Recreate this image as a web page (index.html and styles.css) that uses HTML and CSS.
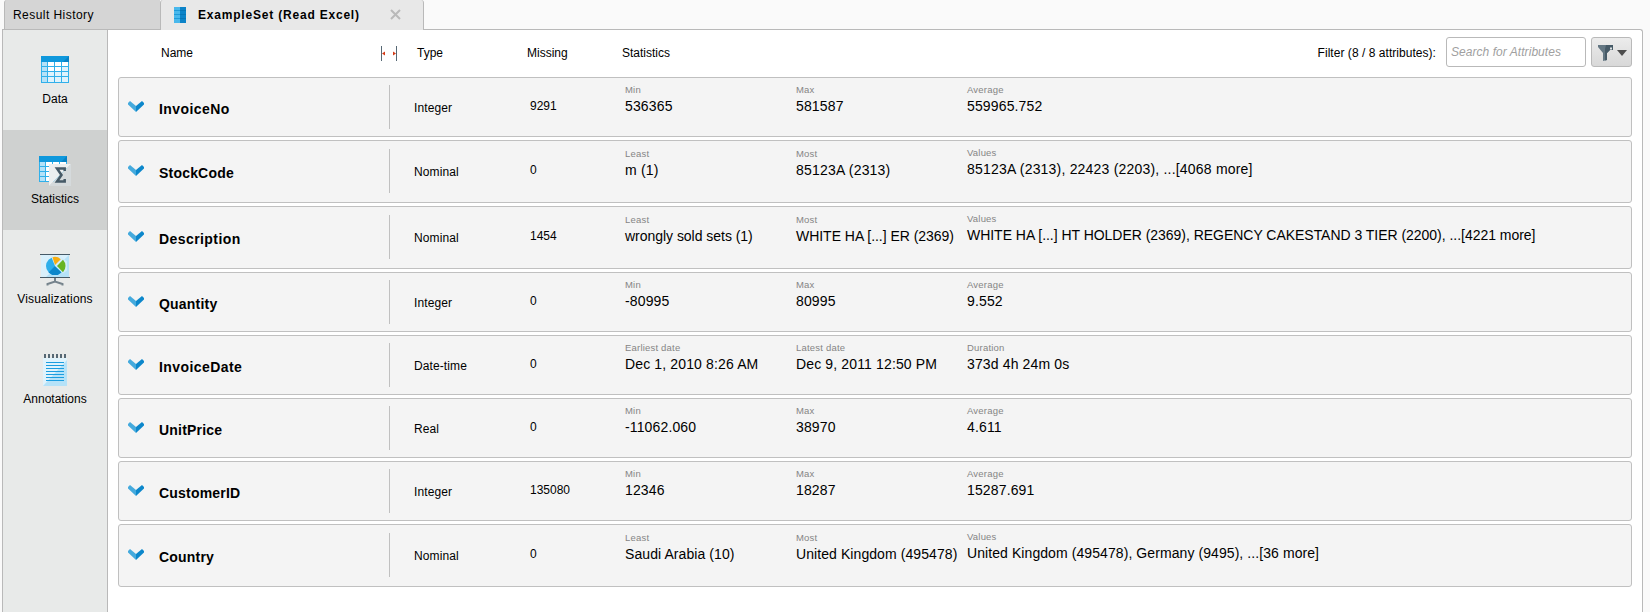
FILE: index.html
```html
<!DOCTYPE html>
<html lang="en">
<head>
<meta charset="utf-8">
<title>ExampleSet (Read Excel)</title>
<link rel="stylesheet" href="styles.css">
</head>
<body>
<svg class="defs" width="0" height="0" aria-hidden="true">
  <symbol id="chevron" viewBox="0 0 16 11"><path fill="#45aadd" d="M0 2 2 0l6 5v6L0 3.500z"/><path fill="#0c87cb" d="m16 2-2-2-6 5v6l8-7.500z"/></symbol>
</svg>
<div class="app">
  <div class="tabs">
    <div class="tab history">Result History</div>
    <div class="tab current">
      <svg class="tab-icon" width="12" height="16" viewBox="0 0 12 16"><path fill="#49b8ec" d="M0 0h6v16H0z"/><path fill="#0b83c8" d="M6 0h6v16H6z"/><path fill="#1f9bd9" d="M0 3h6v1H0zM0 7h6v1H0zM0 11h6v1H0z"/><path fill="#0675b6" d="M6 3h6v1H6zM6 7h6v1H6zM6 11h6v1H6z"/></svg>
      <span class="tab-title">ExampleSet (Read Excel)</span>
      <svg class="close" width="11" height="11" viewBox="0 0 11 11"><path d="M1 1 10 10M10 1 1 10" stroke="#b9b9b9" stroke-width="2"/></svg>
    </div>
  </div>
  <div class="frame">
    <nav class="side">
      <div class="side-item">
        <svg width="28" height="27" viewBox="0 0 28 27"><path fill="#31b0ea" d="M0 0h28v27H0z"/><path fill="#0f98dc" d="M0 0h28v6H0z"/><path fill="#0782c5" d="M28 0v6h-6z"/><path fill="#b5e2f8" d="M1 6h5v4H1zM1 11h5v4H1zM1 16h5v4H1zM1 21h5v5H1z"/><path fill="#fff" d="M7 6h6v4H7zM14 6h6v4h-6zM21 6h6v4h-6zM7 11h6v4H7zM14 11h6v4h-6z"/><path fill="#e0f3fc" d="M21 11h6v4h-6zM7 16h6v4H7zM14 16h6v4h-6zM21 16h6v4h-6zM7 21h6v5H7zM14 21h6v5h-6zM21 21h6v5h-6z"/></svg>
        <span>Data</span>
      </div>
      <div class="side-item selected">
        <svg width="32" height="30" viewBox="0 0 32 30"><path fill="#31b0ea" d="M0 0h28v26H0z"/><path fill="#0f98dc" d="M0 0h28v6H0z"/><path fill="#0782c5" d="M28 0v6h-6z"/><path fill="#b5e2f8" d="M1 6h5v4H1zM1 11h5v4H1zM1 16h5v4H1zM1 21h5v4H1z"/><path fill="#fff" d="M7 6h6v4H7zM14 6h6v4h-6zM21 6h6v4h-6zM7 11h6v4H7zM7 16h6v4H7zM7 21h6v4H7z"/><path fill="#eceff0" d="M10 8h22L10 30z"/><path fill="#d5dadc" d="M32 8v22H10z"/><path d="M25.700 15v-2.500H18l4.500 6.500-4.500 6.500h7.700V23" fill="none" stroke="#465a67" stroke-width="2.500"/></svg>
        <span>Statistics</span>
      </div>
      <div class="side-item tall-icon">
        <svg width="30" height="32" viewBox="0 0 30 32"><path fill="#d9f0fb" d="M1 1h28v22H1z"/><path fill="#b5e2f8" d="M29 1v22H6z"/><path fill="#465a67" d="M0 0h30v1H0zM0 23h30v1H0z"/><circle cx="15" cy="12" r="9" fill="#2caeea"/><path fill="#0d87cb" d="m15 12 6.400 6.400A9 9 0 0 1 8.600 18.400z"/><path fill="#d3edfa" d="m15 12-4-10h8l4 2.500 4 3v9l-4 3z"/><path fill="#f6ad12" d="M15 11 12.500 3.200a9 9 0 0 1 8.300 2z"/><path fill="#67b423" d="m17 12 6-6.200a9 9 0 0 1 0 12.400z"/><path d="M15 24v4M7.500 31.500V30l7.500-2.500L22.500 30v1.500" fill="none" stroke="#75838c" stroke-width="2"/></svg>
        <span class="wide">Visualizations</span>
      </div>
      <div class="side-item tall-icon">
        <svg width="24" height="32" viewBox="0 0 24 32"><path fill="#e0f3fc" d="M0 4h24v28H0z"/><path fill="#b5e2f8" d="M24 6v26H0z"/><path fill="#566874" d="M1 0h2v4H1zM5 0h2v4H5zM9 0h2v4H9zM13 0h2v4h-2zM17 0h2v4h-2zM21 0h2v4h-2z"/><path fill="#1b9ee0" d="M3 8h18v1H3zM3 11h18v1H3zM3 14h18v1H3zM3 17h18v1H3zM3 20h18v1H3zM3 23h18v1H3zM3 26h18v1H3z"/></svg>
        <span>Annotations</span>
      </div>
    </nav>
    <main class="main">
      <header class="head">
        <span class="h-name">Name</span>
        <svg class="resize" width="16" height="15" viewBox="0 0 16 15"><path fill="#566874" d="M0 0h1v15H0zM15 0h1v15h-1z"/><path fill="#d33a17" d="m1 7.500 3-2v4zM15 7.500l-3-2v4z"/></svg>
        <span class="h-type">Type</span>
        <span class="h-missing">Missing</span>
        <span class="h-stats">Statistics</span>
        <span class="h-filter">Filter (8 / 8 attributes):</span>
        <input class="search" type="text" placeholder="Search for Attributes">
        <button class="filter-btn" aria-label="Filter"><svg width="30" height="16" viewBox="0 0 30 16"><path fill="#647783" d="M0 0h15v5h-3L9 8v7l-4 1V8L0 2z"/><path fill="#465a67" d="M8 0h7v5h-3L9 8v7l-2 .5V4z"/><path fill="#dce1e3" d="M12 2.500h2v2h-2z"/><path fill="#4d4d4d" d="M19 5h10l-5 6z"/></svg></button>
      </header>
      <div class="rows" id="rows"></div>
    </main>
  </div>
</div>
<script src="rows.js"></script>
</body>
</html>
```
FILE: styles.css
```css
* { box-sizing: border-box; }
body { margin: 0; font: 12px/14px "Liberation Sans", Arial, sans-serif; color: #000; background: #fafafa; overflow: hidden; }
.defs { display: block; height: 0; }
.app { width: 1650px; height: 612px; padding-left: 2px; display: flex; flex-direction: column; }
.tabs { display: flex; height: 29px; padding-left: 2px; flex: none; }
.tab { display: flex; align-items: center; letter-spacing: .45px; border-left: 1px solid #b9b9b9; }
.history { width: 156px; padding-left: 8px; background: #d5d5d5; border-top-left-radius: 3px; }
.current { position: relative; z-index: 1; width: 264px; margin-bottom: -1px; padding: 0 0 1px 13px; background: #e8e8e8; border-right: 1px solid #b9b9b9; border-radius: 3px 3px 0 0; }
.tab-title { width: 161px; margin-left: 12px; font-weight: bold; letter-spacing: .8px; white-space: nowrap; }
.close { margin-left: 31px; }
.frame { display: flex; width: 1641px; height: 583px; background: #fff; border: 1px solid #b9b9b9; border-bottom: 0; border-top-right-radius: 3px; }
.side { width: 105px; background: #e8eae9; border-right: 1px solid #b9b9b9; flex: none; }
.side-item { height: 100px; padding-top: 26px; display: flex; flex-direction: column; align-items: center; }
.side-item.tall-icon { padding-top: 24px; }
.side-item span { margin-top: auto; margin-bottom: 24px; }
.side-item .wide { letter-spacing: .17px; }
.side-item.selected { background: #cfd1d0; }
.main { flex: 1; padding: 0 10px; }
.head { height: 47px; display: flex; align-items: center; padding-bottom: 1px; }
.h-name { width: 220px; margin-left: 43px; }
.resize { flex: none; }
.h-type { width: 110px; margin-left: 20px; }
.h-missing { width: 95px; }
.h-stats { flex: 1; }
.h-filter { letter-spacing: .04px; }
.search { width: 140px; height: 30px; margin: 0 0 2px 10px; padding: 0 4px; font: 12px "Liberation Sans", Arial, sans-serif; letter-spacing: .05px; border: 1px solid #b9b9b9; border-radius: 3px; }
.search::placeholder { color: #a0a0a0; font-style: italic; opacity: 1; }
.filter-btn { width: 41px; height: 30px; margin: 0 0 2px 5px; padding: 1px 0 0 6px; border: 1px solid #b9b9b9; border-radius: 3px; background: linear-gradient(#ececec, #d8d8d8); display: flex; align-items: center; }
.rows { display: flex; flex-direction: column; gap: 3px; }
.row { display: flex; height: 60px; padding-top: 7px; background: #f4f4f4; border: 1px solid #c0c0c0; border-radius: 3px; white-space: nowrap; }
.row.nominal { height: 63px; padding-top: 8px; }
.chevron { width: 16px; height: 11px; margin: 16px 0 0 9px; flex: none; }
.name { width: 230px; margin-left: 15px; padding-top: 16px; font-size: 14px; line-height: 16px; font-weight: bold; letter-spacing: .2px; }
.type { height: 44px; width: 141px; padding: 16px 0 0 24px; border-left: 1px solid #c0c0c0; letter-spacing: .1px; flex: none; }
.missing { width: 95px; padding-top: 14px; flex: none; }
.stat { width: 171px; margin-top: -1px; flex: none; }
.stat.values { margin-top: -2px; }
.label { font-size: 9.500px; line-height: 11px; color: #858585; letter-spacing: .2px; }
.value { font-size: 14px; line-height: 16px; margin-top: 3px; letter-spacing: .14px; }
.stockcode .value { letter-spacing: .2px; }
.description .value { letter-spacing: -.03px; }
.country .value { letter-spacing: .08px; }
.invoiceno .name, .invoicedate .name, .description .name { letter-spacing: .42px; }
```
FILE: rows.js
```js
const rows = [
  ["InvoiceNo", "Integer", "9291", ["Min", "536365"], ["Max", "581587"], ["Average", "559965.752"]],
  ["StockCode", "Nominal", "0", ["Least", "m (1)"], ["Most", "85123A (2313)"], ["Values", "85123A (2313), 22423 (2203), ...[4068 more]"]],
  ["Description", "Nominal", "1454", ["Least", "wrongly sold sets (1)"], ["Most", "WHITE HA [...] ER (2369)"], ["Values", "WHITE HA [...] HT HOLDER (2369), REGENCY CAKESTAND 3 TIER (2200), ...[4221 more]"]],
  ["Quantity", "Integer", "0", ["Min", "-80995"], ["Max", "80995"], ["Average", "9.552"]],
  ["InvoiceDate", "Date-time", "0", ["Earliest date", "Dec 1, 2010 8:26 AM"], ["Latest date", "Dec 9, 2011 12:50 PM"], ["Duration", "373d 4h 24m 0s"]],
  ["UnitPrice", "Real", "0", ["Min", "-11062.060"], ["Max", "38970"], ["Average", "4.611"]],
  ["CustomerID", "Integer", "135080", ["Min", "12346"], ["Max", "18287"], ["Average", "15287.691"]],
  ["Country", "Nominal", "0", ["Least", "Saudi Arabia (10)"], ["Most", "United Kingdom (495478)"], ["Values", "United Kingdom (495478), Germany (9495), ...[36 more]"]]
];

document.getElementById("rows").innerHTML = rows.map(([name, type, missing, ...stats]) => `
  <section class="row ${type.toLowerCase()} ${name.toLowerCase()}">
    <svg class="chevron"><use href="#chevron"/></svg>
    <div class="name">${name}</div>
    <div class="type">${type}</div>
    <div class="missing">${missing}</div>
    ${stats.map(([label, value]) => `<div class="stat ${label.toLowerCase().replace(" ", "-")}"><div class="label">${label}</div><div class="value">${value}</div></div>`).join("")}
  </section>`).join("");
```
